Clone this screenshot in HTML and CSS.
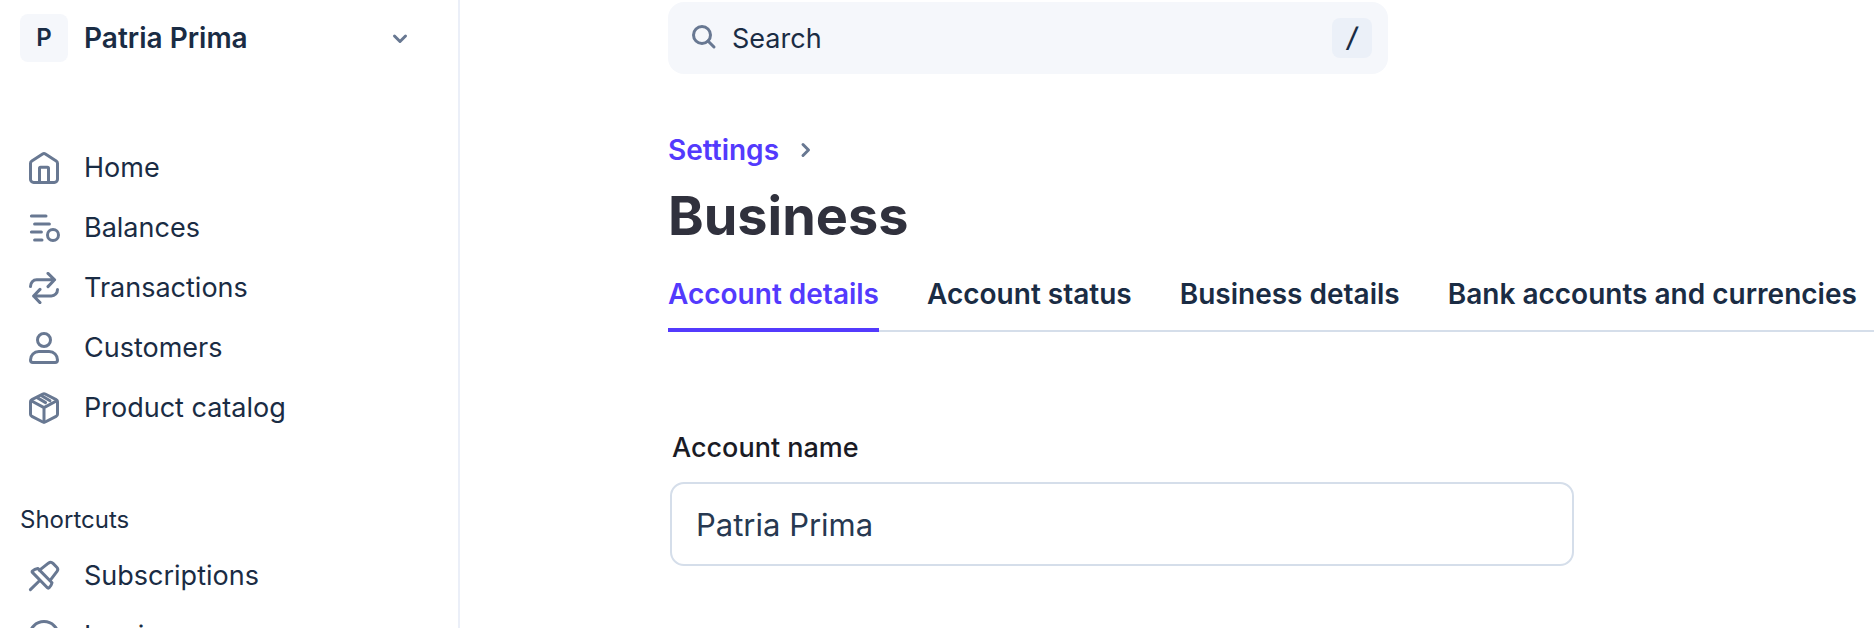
FILE: index.html
```html
<!DOCTYPE html>
<html lang="en">
  <head>
    <meta charset="UTF-8" />
    <meta name="viewport" content="width=device-width, initial-scale=1.0" />
    <title>Business settings</title>
    <link rel="stylesheet" href="styles.css">
  </head>

  <body>
    <aside class="sidebar">
      <button class="account" type="button">
        <span class="avatar">P</span>
        <span class="account-name">Patria Prima</span>
        <svg class="chevron" viewBox="0 0 16 16"><path d="M2.5 6L8 11.5 13.5 6" /></svg>
      </button>

      <nav class="menu">
        <a href="#">
          <svg class="icon" viewBox="0 0 16 16"><path d="M1.25 5.6c0-.5.25-.9.65-1.15L7.3 1a1.3 1.3 0 0 1 1.4 0l5.4 3.45c.4.25.65.65.65 1.15v8c0 .9-.7 1.6-1.6 1.6H2.85c-.9 0-1.6-.7-1.6-1.6z" /><path d="M5.75 15V8.1c0-.3.2-.5.5-.5h3.5c.3 0 .5.2.5.5V15" /></svg>
          Home
        </a>
        <a href="#">
          <svg class="icon" viewBox="0 0 16 16"><path d="M1.7 2H9M3.3 6h7.4M1.7 10h5M3.3 14H7" /><circle cx="12.5" cy="11.5" r="2.75" /></svg>
          Balances
        </a>
        <a href="#">
          <svg class="icon" viewBox="0 0 16 16"><path d="M1.25 7.2c0-1.8 1.3-3.3 3.1-3.3h8.9M10 .7l3.3 3.2L10 7.3" /><path d="M14.75 8.7c0 1.8-1.3 3.3-3.1 3.3H2.8M6 8.7L2.8 12 6 15.3" /></svg>
          Transactions
        </a>
        <a href="#">
          <svg class="icon" viewBox="0 0 16 16"><circle cx="8" cy="4" r="3.25" /><path d="M1.25 14c0-2.4 1.8-4.2 4.2-4.2h5.1c2.4 0 4.2 1.8 4.2 4.2 0 .7-.5 1.2-1.2 1.2H2.45c-.7 0-1.2-.5-1.2-1.2z" /></svg>
          Customers
        </a>
        <a href="#">
          <svg class="icon" viewBox="0 0 16 16"><path d="M1.25 4.9c0-.5.3-.9.7-1.1L7.4 1a1.3 1.3 0 0 1 1.2 0l5.45 2.8c.4.2.7.6.7 1.1v6.2c0 .5-.3.9-.7 1.1L8.6 15a1.3 1.3 0 0 1-1.2 0l-5.45-2.8c-.4-.2-.7-.6-.7-1.1z" /><path d="M1.6 4.4L8 7.8l6.4-3.4M8 7.8V15M4.6 2.8l4.2 2.5M6.8 1.9l4.2 2.5" /></svg>
          Product catalog
        </a>
      </nav>

      <h2 class="menu-title">Shortcuts</h2>
      <nav class="menu">
        <a href="#">
          <svg class="icon" viewBox="0 0 16 16"><path d="M1.2 14.8L6 10.1M2.2 5.5c.8-.8 1.7-1.2 2.7-1.3l7.1 7.2c-.2 1-.7 1.8-1.5 2.5-.3.2-.6.2-.8 0L2.2 6.2c-.2-.2-.2-.5 0-.7z" /><path d="M5.8 5.1l4.4-3.5c.8-.6 1.6-.6 2.3.1l1.9 1.9c.6.6.6 1.4.1 2.1l-3.4 4.5" /></svg>
          Subscriptions
        </a>
        <a href="#">
          <svg class="icon" viewBox="0 0 16 16"><circle cx="8" cy="8" r="7.2" /><path d="M8 5.5v5M5.5 8h5" /></svg>
          Invoices
        </a>
      </nav>
    </aside>

    <main class="content">
      <div class="search">
        <svg class="search-icon" viewBox="0 0 24 24"><circle cx="10" cy="9" r="8.5" /><path d="M16 15l6 6" /></svg>
        <input type="text" placeholder="Search" aria-label="Search" />
        <kbd>/</kbd>
      </div>

      <div class="breadcrumb">
        <a href="#">Settings</a>
        <svg class="chevron" viewBox="0 0 16 16"><path d="M6 2.5L11.5 8 6 13.5" /></svg>
      </div>
      <h1>Business</h1>

      <nav class="tabs">
        <a href="#" class="active">Account details</a>
        <a href="#">Account status</a>
        <a href="#">Business details</a>
        <a href="#">Bank accounts and currencies</a>
      </nav>

      <form class="field">
        <label for="account-name">Account name</label>
        <input type="text" id="account-name" value="Patria Prima" />
      </form>
    </main>
  </body>
</html>
```
FILE: styles.css
```css
* {
  box-sizing: border-box;
}
body {
  margin: 0;
  height: 100vh;
  overflow: hidden;
  display: grid;
  grid-template-columns: 460px 1fr;
  background-color: white;
  color: #1a2c44;
  font-family: Inter, sans-serif;
  font-size: 27px;
  line-height: 36px;
}
a {
  color: inherit;
  text-decoration: none;
}
button,
input,
kbd {
  font: inherit;
  color: inherit;
}
svg {
  flex: none;
  fill: none;
  stroke: #687892;
  stroke-width: 1.5;
  stroke-linecap: round;
  stroke-linejoin: round;
}

/* sidebar */
.sidebar {
  border-right: 2px solid #ebeff8;
  overflow: hidden;
}
.account {
  display: flex;
  align-items: center;
  gap: 16px;
  width: 100%;
  padding: 14px 50px 14px 20px;
  border: 0;
  background: none;
  text-align: left;
}
.avatar {
  width: 48px;
  height: 48px;
  border-radius: 8px;
  background-color: #f5f7fb;
  font-size: 24px;
  font-weight: 600;
  line-height: 48px;
  text-align: center;
}
.account-name {
  flex: 1;
  font-size: 28px;
  font-weight: 600;
}
.chevron {
  width: 16px;
  height: 16px;
  overflow: visible;
  stroke-width: 3;
}
.menu {
  display: flex;
  flex-direction: column;
}
.account + .menu {
  margin-top: 62px;
}
.menu a {
  display: flex;
  align-items: center;
  gap: 24px;
  height: 60px;
  padding: 0 28px;
}
.icon {
  width: 32px;
  height: 32px;
}
.menu-title {
  margin: 64px 20px 8px;
  font-size: 24px;
  font-weight: 400;
  line-height: 36px;
}

/* content */
.content {
  min-width: 0;
  padding: 2px 0 0 208px;
  overflow: hidden;
}
.search {
  display: flex;
  align-items: center;
  gap: 16px;
  max-width: 720px;
  height: 72px;
  padding: 0 16px 0 24px;
  border-radius: 16px;
  background-color: #f5f7fb;
}
.search-icon {
  width: 24px;
  height: 24px;
  overflow: visible;
  stroke-width: 3;
}
.search input {
  flex: 1;
  min-width: 0;
  padding: 2px 0 0;
  border: 0;
  outline: 0;
  background: none;
}
.search input::placeholder {
  color: #1a2c44;
  opacity: 1;
}
kbd {
  width: 40px;
  height: 40px;
  border-radius: 8px;
  background-color: #ebf0f8;
  font-weight: 500;
  font-style: italic;
  line-height: 40px;
  text-align: center;
}
.breadcrumb {
  display: flex;
  align-items: center;
  gap: 18px;
  margin-top: 58px;
  color: #533afd;
  font-size: 28px;
  font-weight: 600;
}
h1 {
  margin: 12px 0 0;
  color: #30313d;
  font-size: 54px;
  font-weight: 700;
  line-height: 72px;
}
.tabs {
  display: flex;
  gap: 48px;
  margin-top: 24px;
  font-size: 28px;
  font-weight: 600;
  white-space: nowrap;
  box-shadow: inset 0 -2px #d5deea;
}
.tabs a {
  padding: 0 0 16px;
  border-bottom: 4px solid transparent;
}
.tabs .active {
  color: #533afd;
  border-color: #533afd;
}
.field {
  display: flex;
  flex-direction: column;
  gap: 16px;
  max-width: 908px;
  margin-top: 98px;
  padding: 0 2px;
}
.field label {
  padding: 0 2px;
  color: #1a1b25;
  font-weight: 500;
}
.field input {
  height: 84px;
  padding: 0 24px;
  border: 2px solid #d5deea;
  border-radius: 14px;
  background-color: white;
  color: #273951;
  font-size: 31px;
}
```
